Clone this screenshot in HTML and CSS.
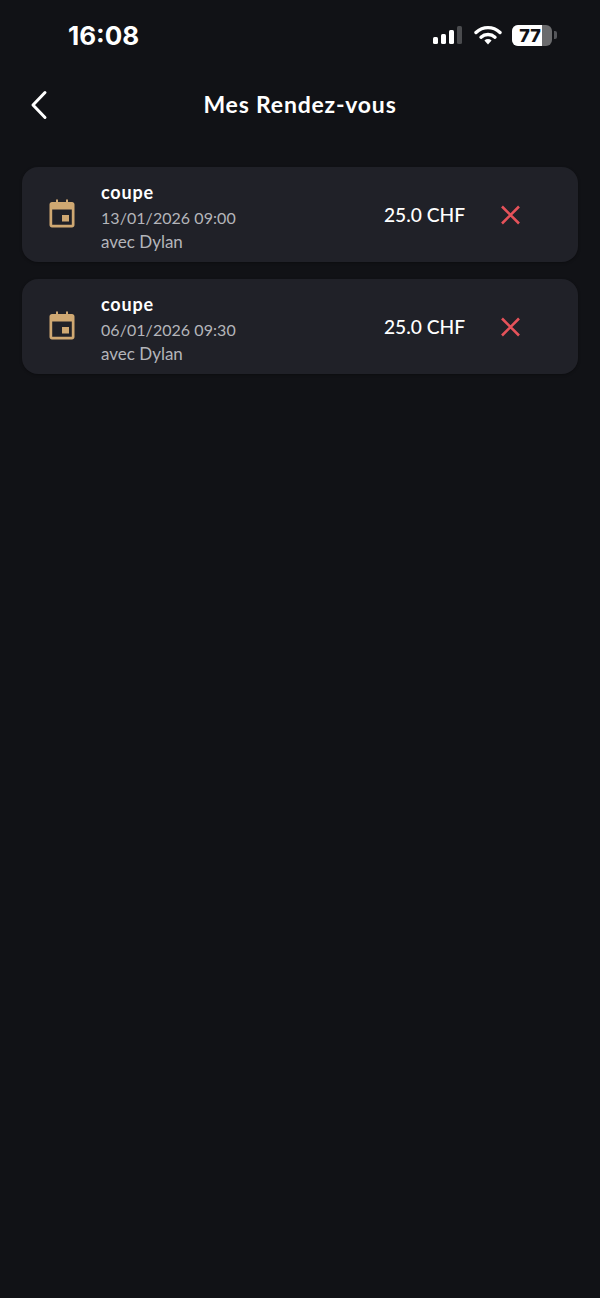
FILE: index.html
```html
<!DOCTYPE html>
<html>
    <head>
        <meta charset="utf-8">
        <title>Mes Rendez-vous</title>
        <link rel="stylesheet" href="styles.css">
    </head>
    <body>
        <div class="status-bar">
            <span class="time">16:08</span>
            <div class="status-icons">
                <svg class="signal" width="32" height="20" viewBox="0 0 32 20">
                    <rect x="1" y="12" width="5" height="7" rx="1.5" fill="#fff"/>
                    <rect x="9" y="9" width="5" height="10" rx="1.5" fill="#fff"/>
                    <rect x="17" y="5" width="5" height="14" rx="1.5" fill="#fff"/>
                    <rect x="25" y="1" width="5" height="18" rx="1.5" fill="#4a4b4e"/>
                </svg>
                <svg class="wifi" width="28" height="20" viewBox="0 0 28 20">
                    <path d="M2 7.5C9 1 19 1 26 7.5" fill="none" stroke="#fff" stroke-width="3.4" stroke-linecap="round"/>
                    <path d="M7 12.2C11 8.6 17 8.6 21 12.2" fill="none" stroke="#fff" stroke-width="3.4" stroke-linecap="round"/>
                    <path d="M10.4 15.4C12.5 13.6 15.5 13.6 17.6 15.4L14 19.4Z" fill="#fff"/>
                </svg>
                <div class="battery">
                    <div class="battery-body">
                        <div class="battery-level"></div>
                        <span class="battery-text">77</span>
                    </div>
                    <div class="battery-tip"></div>
                </div>
            </div>
        </div>

        <div class="header">
            <svg class="back" width="20" height="30" viewBox="0 0 20 30">
                <path d="M16 2.5L4 15L16 27.5" fill="none" stroke="#fff" stroke-width="3" stroke-linecap="round" stroke-linejoin="round"/>
            </svg>
            <h1>Mes Rendez-vous</h1>
        </div>

        <div class="list">
            <div class="card">
                <svg class="cal" width="26" height="30" viewBox="0 0 26 30">
                    <path d="M3 3H7V0.5H9V3H17V0.5H19V3H23C24.4 3 25.5 4.1 25.5 5.5V26C25.5 27.4 24.4 28.5 23 28.5H3C1.6 28.5 0.5 27.4 0.5 26V5.5C0.5 4.1 1.6 3 3 3ZM3.2 10.5V25.8H22.8V10.5Z" fill="#cfa872" fill-rule="evenodd"/>
                    <rect x="13" y="16" width="7" height="6.5" fill="#cfa872"/>
                </svg>
                <div class="info">
                    <div class="name">coupe</div>
                    <div class="date">13/01/2026 09:00</div>
                    <div class="who">avec Dylan</div>
                </div>
                <div class="price">25.0 CHF</div>
                <svg class="del" width="22" height="22" viewBox="0 0 22 22">
                    <path d="M3 2.5L20 19.5M20 2.5L3 19.5" fill="none" stroke="#e5525a" stroke-width="2.6"/>
                </svg>
            </div>
            <div class="card">
                <svg class="cal" width="26" height="30" viewBox="0 0 26 30">
                    <path d="M3 3H7V0.5H9V3H17V0.5H19V3H23C24.4 3 25.5 4.1 25.5 5.5V26C25.5 27.4 24.4 28.5 23 28.5H3C1.6 28.5 0.5 27.4 0.5 26V5.5C0.5 4.1 1.6 3 3 3ZM3.2 10.5V25.8H22.8V10.5Z" fill="#cfa872" fill-rule="evenodd"/>
                    <rect x="13" y="16" width="7" height="6.5" fill="#cfa872"/>
                </svg>
                <div class="info">
                    <div class="name">coupe</div>
                    <div class="date">06/01/2026 09:30</div>
                    <div class="who">avec Dylan</div>
                </div>
                <div class="price">25.0 CHF</div>
                <svg class="del" width="22" height="22" viewBox="0 0 22 22">
                    <path d="M3 2.5L20 19.5M20 2.5L3 19.5" fill="none" stroke="#e5525a" stroke-width="2.6"/>
                </svg>
            </div>
        </div>
    </body>
</html>
```

FILE: styles.css
```css
html, body {
    margin: 0;
    padding: 0;
}

body {
    width: 600px;
    height: 1298px;
    overflow: hidden;
    background-color: #111216;
    color: white;
    font-family: "Lato", "Liberation Sans", sans-serif;
}

.status-bar {
    height: 72px;
    display: flex;
    align-items: center;
    justify-content: space-between;
    padding: 0 45px 0 68px;
    box-sizing: border-box;
}

.time {
    font-family: "Inter", sans-serif;
    font-size: 26px;
    font-weight: 700;
    margin-top: -2px;
}

.status-icons {
    display: flex;
    align-items: center;
    gap: 10px;
    margin-right: -2px;
    margin-top: -2px;
}

.battery {
    display: flex;
    align-items: center;
    gap: 2px;
}

.battery-body {
    position: relative;
    width: 40px;
    height: 21px;
    border-radius: 6px;
    background-color: #6b6b6d;
    overflow: hidden;
}

.battery-level {
    width: 30px;
    height: 100%;
    background-color: white;
}

.battery-text {
    position: absolute;
    left: 0;
    right: 4px;
    top: 0;
    line-height: 21px;
    text-align: center;
    font-family: "Inter", sans-serif;
    font-size: 18px;
    font-weight: 800;
    color: #111216;
}

.battery-tip {
    width: 3px;
    height: 8px;
    border-radius: 0 2px 2px 0;
    background-color: #55565a;
}

.header {
    height: 66px;
    display: flex;
    align-items: center;
    justify-content: center;
    position: relative;
}

.back {
    position: absolute;
    left: 29px;
    top: 18px;
}

h1 {
    margin: 0 0 2px;
    font-size: 23px;
    font-weight: 700;
    letter-spacing: 0.8px;
}

.list {
    display: flex;
    flex-direction: column;
    gap: 17px;
    padding: 29px 22px 0;
}

.card {
    height: 95px;
    display: flex;
    align-items: center;
    box-sizing: border-box;
    padding: 0 57px 0 27px;
    border-radius: 16px;
    background-color: #202128;
    box-shadow: 0 1px 3px rgba(0, 0, 0, 0.3);
}

.cal {
    margin-top: -2px;
}

.info {
    flex: 1;
    margin-left: 26px;
    padding-top: 4px;
}

.name {
    font-size: 18px;
    font-weight: 700;
    line-height: 23px;
    letter-spacing: 0.8px;
}

.date {
    font-size: 16px;
    line-height: 27px;
    letter-spacing: 0.05px;
    color: #b4b5ba;
}

.who {
    font-size: 17px;
    line-height: 21px;
    color: #b4b5ba;
}

.price {
    font-size: 19.2px;
    font-weight: 500;
    margin-right: 34px;
}
```
